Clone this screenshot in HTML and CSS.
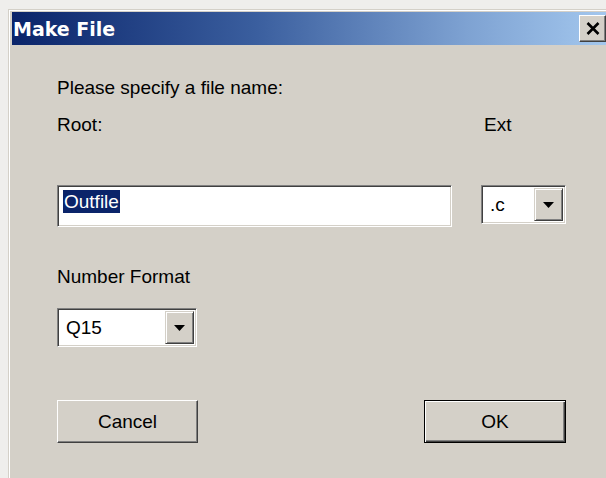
FILE: index.html
```html
<!DOCTYPE html>
<html lang="en">
<head>
<meta charset="utf-8">
<title>Make File</title>
<link rel="stylesheet" href="styles.css">
</head>
<body>
<div class="window">
  <div class="titlebar">
    <span class="title">Make File</span>
    <button class="close" type="button" aria-label="Close">
      <svg width="14" height="13" viewBox="0 0 14 13"><path d="M1.5 1 L12.5 12 M12.5 1 L1.5 12" stroke="#000" stroke-width="2.6" fill="none"/></svg>
    </button>
  </div>
  <div class="dialog">
    <p class="prompt">Please specify a file name:</p>
    <div class="file-row">
      <div class="root-col">
        <div class="label">Root:</div>
        <div class="textbox"><span class="selection">Outfile</span></div>
      </div>
      <div class="ext-col">
        <div class="label ext-label">Ext</div>
        <div class="combo combo-ext">
          <span class="combo-value">.c</span>
          <span class="drop"><svg width="11" height="6" viewBox="0 0 11 6"><path d="M0 0 H11 L5.5 6 Z" fill="#000"/></svg></span>
        </div>
      </div>
    </div>
    <div class="label format-label">Number Format</div>
    <div class="combo combo-format">
      <span class="combo-value">Q15</span>
      <span class="drop"><svg width="11" height="6" viewBox="0 0 11 6"><path d="M0 0 H11 L5.5 6 Z" fill="#000"/></svg></span>
    </div>
    <div class="actions">
      <button class="btn" type="button">Cancel</button>
      <button class="btn btn-default" type="button">OK</button>
    </div>
  </div>
</div>
</body>
</html>
```
FILE: styles.css
```css
html, body {
  margin: 0;
  padding: 0;
  height: 100%;
  overflow: hidden;
  background: #efeeec;
}

body {
  font-family: "Liberation Sans", Arial, sans-serif;
  font-size: 19px;
  line-height: 22px;
  color: #000;
}

.window {
  margin: 9px 0 0 8px;
  width: 610px;
  height: 480px;
  box-sizing: border-box;
  border-top: 1px solid #d4d0c8;
  border-left: 1px solid #d4d0c8;
  padding: 2px 0 0 3px;
  background: #d4d0c8;
  box-shadow: inset 1px 1px 0 #fff;
}

.titlebar {
  height: 33px;
  display: flex;
  align-items: center;
  background: linear-gradient(to right, #0a246a 0%, #3a5e9e 40%, #7ea2d2 75%, #a6caf0 100%);
}

.title {
  font-family: "DejaVu Sans", sans-serif;
  font-weight: bold;
  font-size: 19px;
  color: #fff;
  padding-left: 1px;
}

.close {
  margin-left: auto;
  margin-right: 12px;
  width: 27px;
  height: 27px;
  padding: 0;
  display: flex;
  align-items: center;
  justify-content: center;
  background: #d4d0c8;
  border: 1px solid;
  border-color: #fff #404040 #404040 #fff;
  box-shadow: inset -1px -1px 0 #808080;
}

.dialog {
  padding: 32px 0 0 45px;
}

.prompt {
  margin: 0;
}

.label {
  height: 22px;
}

.file-row {
  display: flex;
  align-items: flex-start;
  gap: 29px;
  margin-top: 15px;
}

.root-col .textbox {
  margin-top: 49px;
}

.ext-col .combo {
  margin-top: 49px;
}

.ext-label {
  padding-left: 3px;
}

.textbox {
  width: 395px;
  height: 42px;
  box-sizing: border-box;
  background: #fff;
  border: 1px solid;
  border-color: #808080 #fff #fff #808080;
  box-shadow: inset 1px 1px 0 #404040, inset -1px -1px 0 #d4d0c8;
  padding: 4px 0 0 5px;
}

.selection {
  display: inline-block;
  background: #0a246a;
  color: #fff;
  height: 23px;
  line-height: 23px;
  padding: 0 1px;
}

.combo {
  height: 39px;
  box-sizing: border-box;
  display: flex;
  align-items: stretch;
  background: #fff;
  border: 1px solid;
  border-color: #808080 #fff #fff #808080;
  box-shadow: inset 1px 1px 0 #404040, inset -1px -1px 0 #d4d0c8;
  padding: 2px;
}

.combo-ext { width: 85px; }
.combo-format { width: 140px; }

.combo-value {
  flex: 1;
  display: flex;
  align-items: center;
  padding-left: 6px;
}

.drop {
  width: 29px;
  box-sizing: border-box;
  display: flex;
  align-items: center;
  justify-content: center;
  background: #d4d0c8;
  border: 1px solid;
  border-color: #d4d0c8 #404040 #404040 #d4d0c8;
  box-shadow: inset 1px 1px 0 #fff, inset -1px -1px 0 #808080;
}

.format-label {
  margin-top: 39px;
}

.combo-format {
  margin-top: 20px;
}

.actions {
  width: 509px;
  display: flex;
  justify-content: space-between;
  margin-top: 53px;
}

.btn {
  width: 141px;
  height: 43px;
  font: inherit;
  color: #000;
  background: #d4d0c8;
  border: 1px solid;
  border-color: #fff #404040 #404040 #fff;
  box-shadow: inset -1px -1px 0 #808080;
  padding: 0;
}

.btn-default {
  width: 142px;
  border: 1px solid #000;
  box-shadow: inset 1px 1px 0 #fff, inset -1px -1px 0 #404040, inset -2px -2px 0 #808080;
}
```
